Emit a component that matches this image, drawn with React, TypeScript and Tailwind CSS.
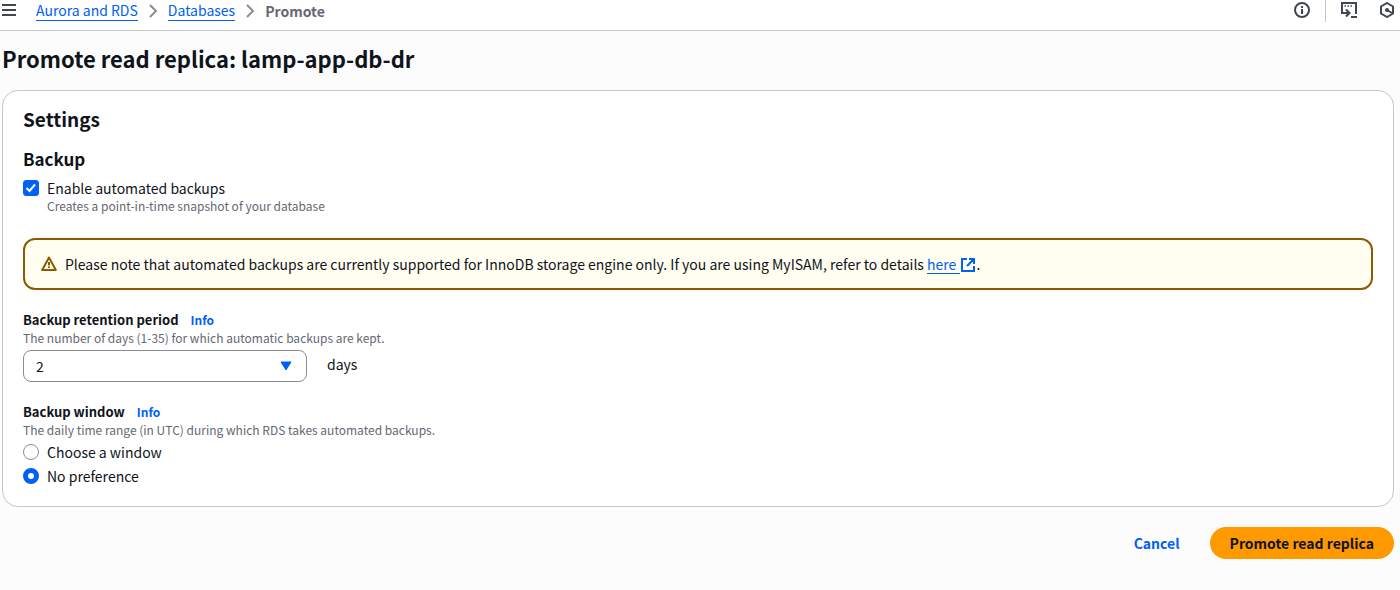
import { useState } from 'react'
import type { ReactNode } from 'react'

const linkStyle = 'border-b border-[#0061f2] text-[#0061f2]'

function Icon({ children }: { children: ReactNode }) {
  return (
    <svg viewBox="0 0 16 16" className="size-4 shrink-0" fill="none" stroke="currentColor" strokeWidth="2" aria-hidden="true">
      {children}
    </svg>
  )
}

function Chevron() {
  return (
    <svg viewBox="0 0 16 16" className="mx-[7px] size-4 shrink-0 text-[#8c8c94]" fill="none" stroke="currentColor" strokeWidth="2" aria-hidden="true">
      <path d="M5 2l6 6-6 6" />
    </svg>
  )
}

function TopBar() {
  return (
    <header className="flex items-start border-b border-[#c6c6cd] bg-white pb-2 pr-[5px] text-[#424650]">
      <button type="button" aria-label="Open navigation" className="flex h-5 w-9 items-center pl-px">
        <Icon>
          <path d="M1 3h14M1 8h14M1 13h14" />
        </Icon>
      </button>
      <nav aria-label="Breadcrumbs" className="flex items-center leading-5">
        <a href="#rds" className={linkStyle}>Aurora and RDS</a>
        <Chevron />
        <a href="#databases" className={linkStyle}>Databases</a>
        <Chevron />
        <span className="font-bold text-[#656871]">Promote</span>
      </nav>
      <div className="ml-auto flex items-start">
        <button type="button" aria-label="Information" className="flex h-5 items-center">
          <Icon>
            <circle cx="8" cy="8" r="7" />
            <path d="M8 4v2M8 7v5" />
          </Icon>
        </button>
        <span className="ml-[15px] h-[22px] w-px bg-[#c6c6cd]" />
        <button type="button" aria-label="CloudShell" className="ml-[15px] flex h-5 items-center">
          <Icon>
            <path d="M1 7V1h14v11M10 15h6M1 7v4h7M5 7.500l3.500 3.500L5 14.500" />
            <path d="M3.500 4h1.500M6.500 4h1.500M9.500 4h1.500" strokeWidth="1.500" />
          </Icon>
        </button>
        <button type="button" aria-label="Amazon Q" className="ml-[22px] flex h-5 items-center">
          <Icon>
            <path d="M8 1l6 3.500v7L8 15l-6-3.500v-7z" />
            <path d="M8 8l5 3" />
            <circle cx="8" cy="8" r="2" fill="currentColor" stroke="none" />
          </Icon>
        </button>
      </div>
    </header>
  )
}

function InfoLink() {
  return <a href="#info" className="ml-3 text-xs font-bold text-[#0061f2]">Info</a>
}

function Hint({ id, children }: { id: string; children: ReactNode }) {
  return <p id={id} className="text-xs leading-4 text-[#656871]">{children}</p>
}

function WindowOption({ label, checked, onSelect }: { label: string; checked: boolean; onSelect: () => void }) {
  return (
    <label className="mt-1 flex items-center gap-2 leading-5">
      <input
        type="radio"
        name="backup-window"
        checked={checked}
        onChange={onSelect}
        className="size-4 appearance-none rounded-full border border-[#8c8c94] bg-white checked:border-5 checked:border-[#0061f2]"
      />
      {label}
    </label>
  )
}

export default function App() {
  const [backups, setBackups] = useState(true)
  const [days, setDays] = useState('2')
  const [choose, setChoose] = useState(false)

  return (
    <div className="min-h-screen bg-[#fcfcfd] font-['Noto_Sans_CJK_SC',sans-serif] text-sm text-[#0f141a]">
      <TopBar />
      <main className="pb-8 pl-[2px] pr-[6px]">
        <h1 className="pb-[17px] pt-3 text-[22px] font-bold leading-[30px]">Promote read replica: lamp-app-db-dr</h1>
        <section className="rounded-2xl border border-[#c6c6cd] bg-white px-5 pb-5 pt-4">
          <h2 className="text-[19px] font-bold leading-6">Settings</h2>
          <h3 className="mt-4 text-[17px] font-bold leading-6">Backup</h3>

          <label className="mt-[7px] flex items-center gap-2 leading-5">
            <span className="grid size-4">
              <input
                type="checkbox"
                checked={backups}
                onChange={(e) => setBackups(e.target.checked)}
                aria-describedby="backups-hint"
                className="peer col-start-1 row-start-1 size-4 appearance-none rounded-[3px] border border-[#8c8c94] checked:border-[#0061f2] checked:bg-[#0061f2]"
              />
              <svg viewBox="0 0 16 16" className="pointer-events-none invisible col-start-1 row-start-1 size-4 peer-checked:visible" fill="none" stroke="white" strokeWidth="2" aria-hidden="true">
                <path d="M3.500 8l3 3 5.500-6.500" />
              </svg>
            </span>
            Enable automated backups
          </label>
          <div className="pl-6">
            <Hint id="backups-hint">Creates a point-in-time snapshot of your database</Hint>
          </div>

          <div role="note" className="mt-6 flex items-center gap-2 rounded-xl border-2 border-[#8b5b00] bg-[#fffef0] px-4 py-[14px] leading-5">
            <span className="text-[#8b5b00]">
              <Icon>
                <path d="M8 1.500L1.200 14h13.600z" strokeLinejoin="round" />
                <path d="M8 6v3.500M8 10.500v1.500" />
              </Icon>
            </span>
            <p>
              Please note that automated backups are currently supported for InnoDB storage engine only. If you are using MyISAM, refer to details{' '}
              <a href="#details" className="inline-flex items-center text-[#0061f2]">
                <span className="border-b border-[#0061f2] pr-1 leading-[18px]">here</span>
                <Icon>
                  <path d="M7 2H2v12h12V9M9 2h5v5M14 2L7 9" />
                </Icon>
              </a>
              .
            </p>
          </div>

          <div className="mt-5 flex items-baseline leading-5">
            <label htmlFor="retention" className="text-[13px] font-bold">Backup retention period</label>
            <InfoLink />
          </div>
          <Hint id="retention-hint">The number of days (1-35) for which automatic backups are kept.</Hint>
          <div className="mt-1 flex items-center gap-5">
            <div className="grid w-[284px] items-center">
              <select
                id="retention"
                value={days}
                onChange={(e) => setDays(e.target.value)}
                aria-describedby="retention-hint"
                className="col-start-1 row-start-1 h-8 w-full appearance-none rounded-lg border border-[#8c8c94] bg-white px-3"
              >
                {Array.from({ length: 35 }, (_, i) => (
                  <option key={i} value={i + 1}>{i + 1}</option>
                ))}
              </select>
              <svg viewBox="0 0 16 16" className="pointer-events-none col-start-1 row-start-1 mr-[13px] size-4 justify-self-end fill-[#0061f2]" aria-hidden="true">
                <path d="M3 4h10l-5 8z" stroke="#0061f2" strokeLinejoin="round" />
              </svg>
            </div>
            <span className="pb-1">days</span>
          </div>

          <fieldset aria-describedby="window-hint" className="mt-5">
            <legend className="flex items-baseline leading-5">
              <span className="text-[13px] font-bold">Backup window</span>
              <InfoLink />
            </legend>
            <Hint id="window-hint">The daily time range (in UTC) during which RDS takes automated backups.</Hint>
            <WindowOption label="Choose a window" checked={choose} onSelect={() => setChoose(true)} />
            <WindowOption label="No preference" checked={!choose} onSelect={() => setChoose(false)} />
          </fieldset>
        </section>

        <div className="mt-5 flex justify-end gap-[10px] font-bold">
          <button type="button" className="h-8 rounded-full px-5 text-[#0061f2]">Cancel</button>
          <button type="button" className="h-8 rounded-full bg-[#ff9900] px-5">Promote read replica</button>
        </div>
      </main>
    </div>
  )
}
